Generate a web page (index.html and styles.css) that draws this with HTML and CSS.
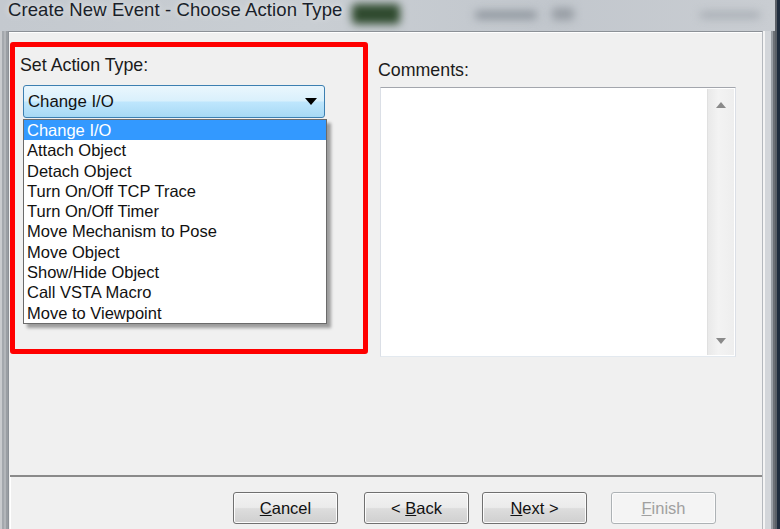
FILE: index.html
```html
<!DOCTYPE html>
<html>
<head>
<meta charset="utf-8">
<link rel="stylesheet" href="styles.css">
</head>
<body>
<div class="screen">
  <div class="titlebar">
    <span class="title">Create New Event - Choose Action Type</span>
    <span class="blur b1"></span>
    <span class="blur b2"></span>
    <span class="blur b3"></span>
    <span class="blur b4"></span>
  </div>
  <div class="desk"></div>
  <div class="frame-left"></div>
  <div class="client">
    <div class="upper">
      <div class="action-panel">
        <div class="label">Set Action Type:</div>
        <div class="combo">
          <span class="combo-text">Change I/O</span>
          <svg class="combo-arrow" width="12" height="7" viewBox="0 0 12 7"><path d="M0 0h12L6 7z" fill="#000"/></svg>
          <ul class="droplist">
            <li class="selected">Change I/O</li>
            <li>Attach Object</li>
            <li>Detach Object</li>
            <li>Turn On/Off TCP Trace</li>
            <li>Turn On/Off Timer</li>
            <li>Move Mechanism to Pose</li>
            <li>Move Object</li>
            <li>Show/Hide Object</li>
            <li>Call VSTA Macro</li>
            <li>Move to Viewpoint</li>
          </ul>
        </div>
      </div>
      <div class="comments-panel">
        <div class="label comments-label">Comments:</div>
        <div class="textarea">
          <div class="text-body"></div>
          <div class="vscroll">
            <svg width="10" height="6" viewBox="0 0 10 6"><path d="M0 6L5 0L10 6z" fill="#8a8a8a"/></svg>
            <svg width="10" height="6" viewBox="0 0 10 6"><path d="M0 0h10L5 6z" fill="#8a8a8a"/></svg>
          </div>
        </div>
      </div>
    </div>
    <div class="separator"></div>
    <div class="buttons">
      <button class="btn"><u>C</u>ancel</button>
      <button class="btn btn-back">&lt; <u>B</u>ack</button>
      <button class="btn btn-next"><u>N</u>ext &gt;</button>
      <button class="btn btn-finish"><u>F</u>inish</button>
    </div>
  </div>
  <div class="frame-right"></div>
</div>
</body>
</html>
```

FILE: styles.css
```css
* { box-sizing: border-box; }
html, body { margin: 0; padding: 0; }
body {
  width: 780px;
  height: 529px;
  overflow: hidden;
  background: #f0f0f0;
  font-family: "Liberation Sans", Arial, sans-serif;
}
.screen {
  display: grid;
  grid-template-columns: 8px 755px 12px 5px;
  grid-template-rows: 31px 498px;
  width: 780px;
  height: 529px;
}
.titlebar {
  grid-column: 1 / 4;
  grid-row: 1;
  position: relative;
  overflow: hidden;
  background: linear-gradient(to right, #c4c9cf 0%, #c9ced3 40%, #c2c7cd 70%, #c9cdd2 100%);
}
.title {
  position: relative;
  z-index: 2;
  display: block;
  padding-left: 8px;
  font-size: 18.5px;
  line-height: 20px;
  color: #1a1f2a;
  text-shadow: 0 0 6px rgba(255,255,255,0.7);
  letter-spacing: 0.1px;
}
.blur {
  position: absolute;
  filter: blur(4px);
  border-radius: 4px;
}
.b1 { left: 352px; top: 4px; width: 48px; height: 20px; background: #2f4a2e; }
.b2 { left: 475px; top: 11px; width: 62px; height: 8px; background: #8d949c; }
.b3 { left: 552px; top: 8px; width: 22px; height: 12px; background: #979da4; }
.b4 { left: 700px; top: 12px; width: 60px; height: 6px; background: #a3a9b0; }
.desk {
  grid-column: 4;
  grid-row: 1 / 3;
  background: linear-gradient(to right, #5b6067 0 2px, #1f2c3d 2px);
}
.frame-left {
  grid-column: 1;
  grid-row: 2;
  background: linear-gradient(to right, #c9cbce 0 2px, #a4a8ad 2px 4px, #b3b6ba 4px 6px, #9a9ea3 6px);
}
.frame-right {
  grid-column: 3;
  grid-row: 2;
  background: linear-gradient(to right, #f4f4f4 0 2px, #d3d6da 2px 8px, #9a9ea4 8px 10px, #6d7177 10px);
}
.client {
  grid-column: 2;
  grid-row: 2;
  border-top: 1px solid #8c9197;
  border-left: 1px solid #8c9197;
  border-right: 1px solid #b4b8bd;
  background: #f0f0f0;
  display: flex;
  flex-direction: column;
}
.upper {
  height: 443px;
  display: flex;
  align-items: flex-start;
  border-top: 1px solid #ffffff;
}
.action-panel {
  margin-left: 1px;
  margin-top: 9px;
  width: 358px;
  height: 312px;
  border: 5px solid #ff0000;
  border-radius: 3px;
  padding: 8px 0 0 5px;
}
.label {
  font-size: 17.8px;
  line-height: 20px;
  color: #1b1b1b;
}
.combo {
  position: relative;
  margin-top: 10px;
  margin-left: 3px;
  width: 302px;
  height: 33px;
  border: 1px solid #3c7fb1;
  border-radius: 3px;
  background: linear-gradient(to bottom, #eaf6fd 0%, #d9f0fc 48%, #bee6fd 52%, #a7d9f5 100%);
  display: flex;
  align-items: center;
  padding-left: 4px;
  padding-right: 7px;
}
.combo-text {
  flex: 1;
  font-size: 16.8px;
  color: #111;
}
.combo-arrow { display: block; }
.droplist {
  position: absolute;
  left: -1px;
  top: 33px;
  width: 304px;
  margin: 0;
  padding: 0;
  list-style: none;
  background: #fff;
  border: 1px solid #6b6b6b;
  box-shadow: 4px 4px 3px rgba(0,0,0,0.35);
  z-index: 5;
}
.droplist li {
  height: 20.3px;
  line-height: 20.3px;
  padding-left: 3px;
  font-size: 16.5px;
  color: #111;
  white-space: nowrap;
}
.droplist li.selected {
  background: #3399ff;
  color: #fff;
}
.comments-panel {
  margin-left: 12px;
  margin-top: 27px;
}
.comments-label { margin-left: -2px; }
.textarea {
  margin-top: 7px;
  width: 356px;
  height: 270px;
  border: 1px solid #abadb3;
  border-top-color: #a3a6ad;
  border-left-color: #dbdfe6;
  border-right-color: #dbdfe6;
  border-bottom-color: #e3e9ef;
  background: #fff;
  display: flex;
  padding: 1px;
}
.text-body { flex: 1; }
.vscroll {
  width: 27px;
  background: linear-gradient(to right, #e9e9e9, #f3f3f3 40%, #eeeeee);
  border-left: 1px solid #e0e0e0;
  display: flex;
  flex-direction: column;
  justify-content: space-between;
  align-items: center;
  padding: 13px 0 11px;
}
.vscroll svg { display: block; }
.separator {
  height: 2px;
  border-top: 2px solid #8a8a8a;
  margin-left: 1px;
}
.buttons {
  display: flex;
  padding: 15px 0 0 222px;
  border-left: 1px solid #ffffff;
  margin-left: 1px;
  flex: 1;
  align-items: flex-start;
}
.btn {
  width: 105px;
  height: 32px;
  border: 1px solid #707070;
  border-radius: 3px;
  background: linear-gradient(to bottom, #f2f2f2 0%, #ebebeb 48%, #dddddd 52%, #cfcfcf 100%);
  font-family: "Liberation Sans", Arial, sans-serif;
  font-size: 16.5px;
  color: #111;
  padding: 0;
  box-shadow: inset 0 0 0 1px #fcfcfc;
}
.btn-back { margin-left: 26px; }
.btn-next { margin-left: 13px; }
.btn-finish {
  margin-left: 24px;
  border-color: #adb2b5;
  background: #f4f4f4;
  color: #a0a0a0;
}
```
